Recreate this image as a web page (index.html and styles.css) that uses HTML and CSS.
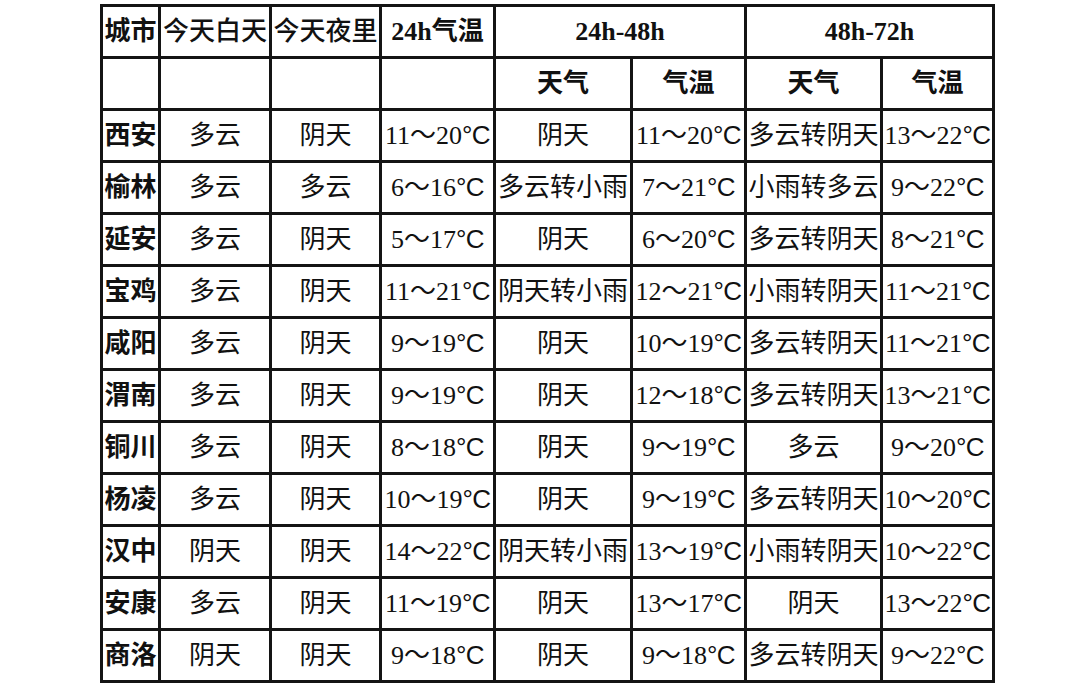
FILE: index.html
```html
<!DOCTYPE html>
<html lang="zh-CN">
<head>
<meta charset="utf-8">
<title>陕西天气预报</title>
<link rel="stylesheet" href="styles.css">
</head>
<body>
<div class="page">
<table class="forecast">
  <colgroup>
    <col class="c-city"><col class="c-day"><col class="c-night"><col class="c-t24">
    <col class="c-w48"><col class="c-t48"><col class="c-w72"><col class="c-t72">
  </colgroup>
  <tbody>
    <tr class="head">
      <td class="city">城市</td>
      <td class="mid">今天白天</td>
      <td class="mid">今天夜里</td>
      <td class="bold">24h气温</td>
      <td class="bold" colspan="2">24h-48h</td>
      <td class="bold" colspan="2">48h-72h</td>
    </tr>
    <tr class="head">
      <td></td><td></td><td></td><td></td>
      <td class="bold">天气</td><td class="bold">气温</td>
      <td class="bold">天气</td><td class="bold">气温</td>
    </tr>
    <tr><td class="city">西安</td><td>多云</td><td>阴天</td><td>11～20<span class="u">°C</span></td><td>阴天</td><td>11～20<span class="u">°C</span></td><td>多云转阴天</td><td>13～22<span class="u">°C</span></td></tr>
    <tr><td class="city">榆林</td><td>多云</td><td>多云</td><td>6～16<span class="u">°C</span></td><td>多云转小雨</td><td>7～21<span class="u">°C</span></td><td>小雨转多云</td><td>9～22<span class="u">°C</span></td></tr>
    <tr><td class="city">延安</td><td>多云</td><td>阴天</td><td>5～17<span class="u">°C</span></td><td>阴天</td><td>6～20<span class="u">°C</span></td><td>多云转阴天</td><td>8～21<span class="u">°C</span></td></tr>
    <tr><td class="city">宝鸡</td><td>多云</td><td>阴天</td><td>11～21<span class="u">°C</span></td><td>阴天转小雨</td><td>12～21<span class="u">°C</span></td><td>小雨转阴天</td><td>11～21<span class="u">°C</span></td></tr>
    <tr><td class="city">咸阳</td><td>多云</td><td>阴天</td><td>9～19<span class="u">°C</span></td><td>阴天</td><td>10～19<span class="u">°C</span></td><td>多云转阴天</td><td>11～21<span class="u">°C</span></td></tr>
    <tr><td class="city">渭南</td><td>多云</td><td>阴天</td><td>9～19<span class="u">°C</span></td><td>阴天</td><td>12～18<span class="u">°C</span></td><td>多云转阴天</td><td>13～21<span class="u">°C</span></td></tr>
    <tr><td class="city">铜川</td><td>多云</td><td>阴天</td><td>8～18<span class="u">°C</span></td><td>阴天</td><td>9～19<span class="u">°C</span></td><td>多云</td><td>9～20<span class="u">°C</span></td></tr>
    <tr><td class="city">杨凌</td><td>多云</td><td>阴天</td><td>10～19<span class="u">°C</span></td><td>阴天</td><td>9～19<span class="u">°C</span></td><td>多云转阴天</td><td>10～20<span class="u">°C</span></td></tr>
    <tr><td class="city">汉中</td><td>阴天</td><td>阴天</td><td>14～22<span class="u">°C</span></td><td>阴天转小雨</td><td>13～19<span class="u">°C</span></td><td>小雨转阴天</td><td>10～22<span class="u">°C</span></td></tr>
    <tr><td class="city">安康</td><td>多云</td><td>阴天</td><td>11～19<span class="u">°C</span></td><td>阴天</td><td>13～17<span class="u">°C</span></td><td>阴天</td><td>13～22<span class="u">°C</span></td></tr>
    <tr><td class="city">商洛</td><td>阴天</td><td>阴天</td><td>9～18<span class="u">°C</span></td><td>阴天</td><td>9～18<span class="u">°C</span></td><td>多云转阴天</td><td>9～22<span class="u">°C</span></td></tr>
  </tbody>
</table>
</div>
</body>
</html>
```

FILE: styles.css
```css
html, body {
  margin: 0;
  padding: 0;
  background: #ffffff;
}

.page {
  padding: 4px 0 0 100px;
}

.forecast {
  border-collapse: collapse;
  table-layout: fixed;
  width: 895px;
  font-family: "Liberation Serif", "Noto Sans CJK SC", serif;
  font-size: 26px;
  color: #111111;
}

.c-city { width: 58px; }
.c-day { width: 111px; }
.c-night { width: 110px; }
.c-t24 { width: 114px; }
.c-w48 { width: 137px; }
.c-t48 { width: 114px; }
.c-w72 { width: 136px; }
.c-t72 { width: 112px; }

.forecast tr {
  height: 52px;
}

.forecast td {
  border: 3px solid #141414;
  padding: 0;
  text-align: center;
  vertical-align: middle;
  white-space: nowrap;
  overflow: hidden;
  line-height: 1;
}

.forecast .u {
  font-family: "Liberation Sans", sans-serif;
  letter-spacing: -0.5px;
}

.forecast .city {
  font-weight: 700;
}

.forecast .mid {
  font-weight: 500;
}

.forecast .bold {
  font-weight: 700;
}
```
